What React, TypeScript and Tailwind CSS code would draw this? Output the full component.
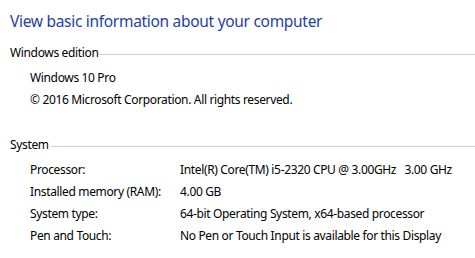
const rows = [
  { label: "Processor:", value: "Intel(R) Core(TM) i5-2320 CPU @ 3.00GHz   3.00 GHz" },
  { label: "Installed memory (RAM):", value: "4.00 GB" },
  { label: "System type:", value: "64-bit Operating System, x64-based processor" },
  { label: "Pen and Touch:", value: "No Pen or Touch Input is available for this Display" },
];

function SectionHeader({ title }: { title: string }) {
  return (
    <div className="flex items-center h-[22px] pl-[10px]">
      <span className="text-black">{title}</span>
      <div className="flex-1 h-px bg-[#cfcfcf] ml-[2px] mt-[2px]" />
    </div>
  );
}

export default function App() {
  return (
    <div className="w-[475px] h-[258px] bg-white overflow-hidden font-['Noto_Sans',sans-serif] text-[12px] leading-[22px] tracking-[-0.35px] text-black pt-[10px]">
      <h1 className="pl-[10px] h-[22px] text-[15.5px] leading-[22px] tracking-[-0.3px] text-[#1f3fa3] font-normal">
        View basic information about your computer
      </h1>

      <div className="mt-[10px]">
        <SectionHeader title="Windows edition" />
        <div className="mt-[3px] pl-[30px]">
          <div>Windows 10 Pro</div>
          <div>© 2016 Microsoft Corporation. All rights reserved.</div>
        </div>
      </div>

      <div className="mt-[23px]">
        <SectionHeader title="System" />
        <div className="mt-[3px] pl-[30px] grid grid-cols-[150px_1fr]">
          {rows.map((r) => (
            <div key={r.label} className="contents">
              <div>{r.label}</div>
              <div className="whitespace-pre">{r.value}</div>
            </div>
          ))}
        </div>
      </div>
    </div>
  );
}
